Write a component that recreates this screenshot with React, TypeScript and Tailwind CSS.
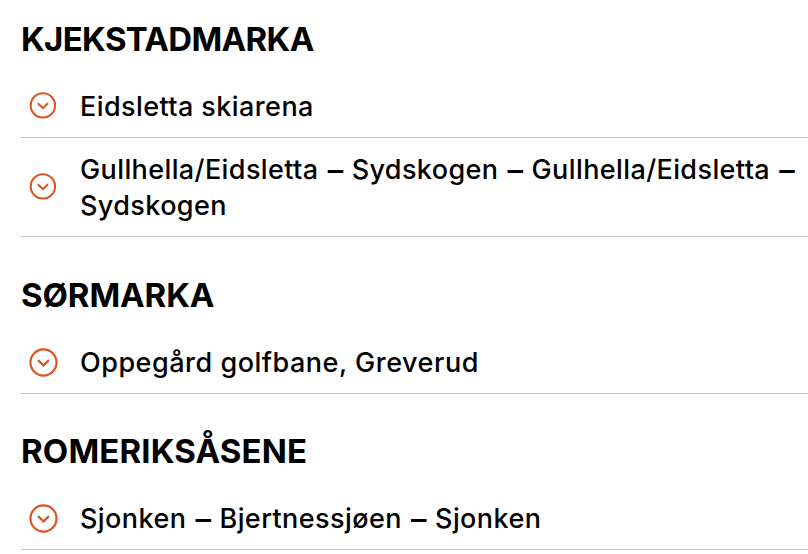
import { Fragment } from "react";

type IconSize = "small" | "large";

function Chevron({ size }: { size: IconSize }) {
  return (
    <svg
      className={size === "small" ? "block size-[28px] shrink-0" : "block size-[29px] shrink-0"}
      viewBox={size === "small" ? "-0.4 0.1 29 29" : "0 0 28 28"}
      fill="none"
      stroke="#dc5424"
      strokeWidth="2.1"
      aria-hidden="true"
    >
      <circle cx="14" cy="14" r="12.6" />
      <path d="M8.7 11.7L14 16.8L19.3 11.7" />
    </svg>
  );
}

function Row({ stops, size, tracking }: { stops: string[]; size: IconSize; tracking: string }) {
  return (
    <button className="flex w-full items-center border-b border-[#c3c3c3] py-[13px] pl-2 text-left">
      <span className="flex w-[51px] shrink-0">
        <Chevron size={size} />
      </span>
      <span className={`-mb-px pt-px text-[27px] leading-9 font-[450] ${tracking}`}>
        {stops.map((stop, i) => (
          <Fragment key={i}>
            {i > 0 && (
              <>
                {" "}
                <span className="mr-[0.5px] ml-[1.5px] align-[-2px] text-[31px] leading-none font-medium">–</span>{" "}
              </>
            )}
            {stop}
          </Fragment>
        ))}
      </span>
    </button>
  );
}

function Heading({ name, tracking }: { name: string; tracking: string }) {
  return <h2 className={`text-[33px] leading-[40px] font-bold ${tracking}`}>{name}</h2>;
}

export default function App() {
  return (
    <main className="h-[554px] w-[808px] overflow-hidden bg-white pl-[21px] font-[Inter,sans-serif] text-black">
      <section className="pt-[19px]">
        <Heading name="KJEKSTADMARKA" tracking="tracking-[-0.65px]" />
        <div className="pt-4">
          <Row stops={["Eidsletta skiarena"]} size="small" tracking="tracking-[0.41px]" />
          <Row
            stops={["Gullhella/Eidsletta", "Sydskogen", "Gullhella/Eidsletta", "Sydskogen"]}
            size="small"
            tracking="tracking-[0.39px]"
          />
        </div>
      </section>
      <section className="pt-[38px]">
        <Heading name="SØRMARKA" tracking="tracking-[-0.1px]" />
        <div className="pt-4">
          <Row stops={["Oppegård golfbane, Greverud"]} size="large" tracking="tracking-[0.51px]" />
        </div>
      </section>
      <section className="pt-[37px]">
        <Heading name="ROMERIKSÅSENE" tracking="tracking-[0.15px]" />
        <div className="pt-4">
          <Row stops={["Sjonken", "Bjertnessjøen", "Sjonken"]} size="large" tracking="tracking-[0.42px]" />
        </div>
      </section>
    </main>
  );
}
